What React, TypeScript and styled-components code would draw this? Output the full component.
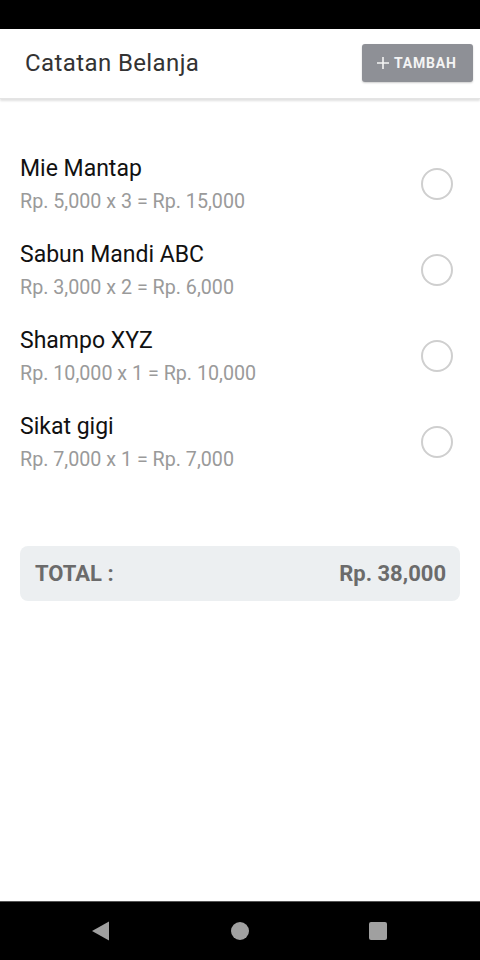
import styled, { createGlobalStyle } from "styled-components";

interface IItem {
  name: string;
  price: number;
  qty: number;
}

const items: IItem[] = [
  { name: "Mie Mantap", price: 5000, qty: 3 },
  { name: "Sabun Mandi ABC", price: 3000, qty: 2 },
  { name: "Shampo XYZ", price: 10000, qty: 1 },
  { name: "Sikat gigi", price: 7000, qty: 1 },
];

const rp = (n: number) => "Rp. " + n.toLocaleString("en-US");

const GlobalStyle = createGlobalStyle`
  * {
    box-sizing: border-box;
  }
  body {
    margin: 0;
    font-family: Roboto, "Noto Sans", sans-serif;
    background: #fff;
  }
`;

const Screen = styled.div`
  display: flex;
  flex-direction: column;
  width: 480px;
  height: 960px;
  overflow: hidden;
`;
const StatusBar = styled.div`
  height: 29px;
  background: #000;
  flex-shrink: 0;
`;
const Header = styled.header`
  display: flex;
  align-items: center;
  justify-content: space-between;
  height: 70px;
  padding: 0 7px 2px 25px;
  background: #fff;
  box-shadow: 0 2px 2px rgba(0, 0, 0, 0.12);
  border-bottom: 1px solid #e4e4e4;
  position: relative;
  z-index: 1;
  flex-shrink: 0;
`;
const Title = styled.h1`
  margin: 0;
  font-size: 24px;
  font-weight: 400;
  letter-spacing: 0.4px;
  color: #333;
`;
const AddButton = styled.button`
  display: flex;
  align-items: center;
  gap: 4px;
  height: 38px;
  width: 111px;
  padding: 0 0 0 14px;
  border: none;
  border-radius: 3px;
  background: #8e9096;
  color: #f4f4f4;
  font-family: Roboto, sans-serif;
  font-size: 14px;
  font-weight: 700;
  letter-spacing: 0.8px;
  box-shadow: 0 1px 2px rgba(0, 0, 0, 0.2);
`;
const Content = styled.main`
  flex: 1;
  padding: 42px 20px 0 20px;
`;
const List = styled.ul`
  list-style: none;
  margin: 0;
  padding: 0;
`;
const Row = styled.li`
  display: flex;
  align-items: center;
  justify-content: space-between;
  height: 86px;
  padding: 0 7px 0 0;
`;
const Info = styled.div`
  display: flex;
  flex-direction: column;
  gap: 5px;
`;
const Name = styled.span`
  font-size: 23px;
  line-height: 30px;
  color: #111;
`;
const Detail = styled.span`
  font-size: 19.7px;
  line-height: 26px;
  color: #9a9a9a;
`;
const Check = styled.span`
  width: 32px;
  height: 32px;
  border-radius: 50%;
  border: 2px solid #cfcfcf;
`;
const TotalBox = styled.div`
  display: flex;
  align-items: center;
  justify-content: space-between;
  margin-top: 61px;
  height: 55px;
  padding: 0 14px 0 15px;
  background: #eceff1;
  border-radius: 8px;
  font-size: 22px;
  font-weight: 700;
  color: #6b6b6b;
`;
const NavBar = styled.nav`
  display: flex;
  align-items: center;
  justify-content: center;
  gap: 98px;
  height: 59px;
  background: #000;
  border-top: 1px solid #555;
  flex-shrink: 0;
`;
const NavSlot = styled.div`
  display: flex;
  align-items: center;
  justify-content: center;
  width: 40px;
`;

function App() {
  const total = items.reduce((s, it) => s + it.price * it.qty, 0);
  return (
    <Screen>
      <GlobalStyle />
      <StatusBar />
      <Header>
        <Title>Catatan Belanja</Title>
        <AddButton>
          <svg width="14" height="14" viewBox="0 0 14 14">
            <path d="M7 1v12M1 7h12" stroke="#f4f4f4" strokeWidth="1.6" />
          </svg>
          TAMBAH
        </AddButton>
      </Header>
      <Content>
        <List>
          {items.map((it, i) => (
            <Row key={i}>
              <Info>
                <Name>{it.name}</Name>
                <Detail>
                  {rp(it.price)} x {it.qty} = {rp(it.price * it.qty)}
                </Detail>
              </Info>
              <Check />
            </Row>
          ))}
        </List>
        <TotalBox>
          <span>TOTAL :</span>
          <span>{rp(total)}</span>
        </TotalBox>
      </Content>
      <NavBar>
        <NavSlot>
          <svg width="20" height="20" viewBox="0 0 20 20">
            <path d="M17 0.5v19L0 10z" fill="#a0a0a0" />
          </svg>
        </NavSlot>
        <NavSlot>
          <svg width="20" height="20" viewBox="0 0 20 20">
            <circle cx="10" cy="10" r="9" fill="#a0a0a0" />
          </svg>
        </NavSlot>
        <NavSlot>
          <svg width="20" height="20" viewBox="0 0 20 20">
            <rect x="1" y="1" width="18" height="18" rx="2" fill="#a0a0a0" />
          </svg>
        </NavSlot>
      </NavBar>
    </Screen>
  );
}

export default App;
